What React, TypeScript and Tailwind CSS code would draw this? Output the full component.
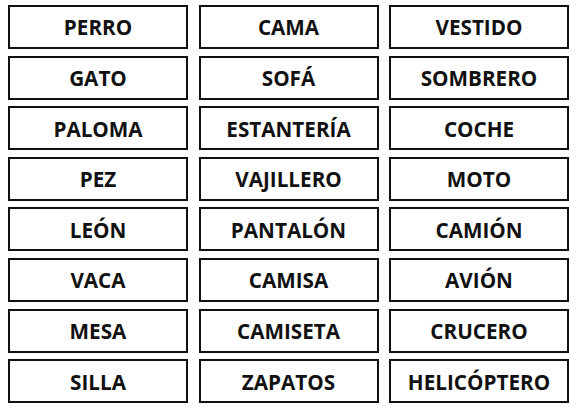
import React from "react";

const words = [
  "PERRO", "CAMA", "VESTIDO",
  "GATO", "SOFÁ", "SOMBRERO",
  "PALOMA", "ESTANTERÍA", "COCHE",
  "PEZ", "VAJILLERO", "MOTO",
  "LEÓN", "PANTALÓN", "CAMIÓN",
  "VACA", "CAMISA", "AVIÓN",
  "MESA", "CAMISETA", "CRUCERO",
  "SILLA", "ZAPATOS", "HELICÓPTERO",
];

export default function App() {
  return (
    <div
      className="w-[578px] h-[409px] bg-white pl-[8px] pt-[5px]"
      style={{ fontFamily: '"Open Sans", sans-serif' }}
    >
      <div className="grid grid-cols-[repeat(3,180px)] grid-rows-[repeat(8,44px)] gap-x-[10.5px] gap-y-[6.6px]">
        {words.map((w) => (
          <div
            key={w}
            className="flex items-center justify-center border-2 border-[#111] pt-[2px] text-[20.7px] font-bold text-[#111]"
          >
            {w}
          </div>
        ))}
      </div>
    </div>
  );
}
